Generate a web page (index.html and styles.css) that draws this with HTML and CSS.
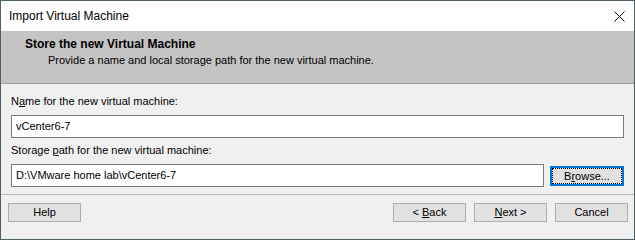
FILE: index.html
```html
<!DOCTYPE html>
<html>
<head>
<meta charset="utf-8">
<link rel="stylesheet" href="styles.css">
</head>
<body>
<div class="window">
  <div class="titlebar">
    <span class="title">Import Virtual Machine</span>
    <svg class="close" width="11" height="11" viewBox="0 0 11 11"><path d="M0.5 0.5 L10.5 10.5 M10.5 0.5 L0.5 10.5" stroke="#000" stroke-width="1" fill="none"/></svg>
  </div>
  <div class="header">
    <div class="h-title">Store the new Virtual Machine</div>
    <div class="h-sub">Provide a name and local storage path for the new virtual machine.</div>
  </div>
  <div class="content">
    <div class="label">N<u>a</u>me for the new virtual machine:</div>
    <div class="row">
      <div class="input">vCenter6-7</div>
    </div>
    <div class="label">Storage <u>p</u>ath for the new virtual machine:</div>
    <div class="row">
      <div class="input">D:\VMware home lab\vCenter6-7</div>
      <div class="btn focus">B<u>r</u>owse...</div>
    </div>
  </div>
  <div class="footer">
    <div class="btn">Help</div>
    <div class="spacer"></div>
    <div class="btn">&lt; <u>B</u>ack</div>
    <div class="btn"><u>N</u>ext &gt;</div>
    <div class="btn">Cancel</div>
  </div>
</div>
</body>
</html>
```

FILE: styles.css
```css
html, body {
  margin: 0;
  padding: 0;
  background: #f0f0f0;
}
body {
  font-family: "Liberation Sans", Arial, sans-serif;
  font-size: 11px;
  color: #000;
}
.window {
  width: 635px;
  height: 240px;
  box-sizing: border-box;
  border: 1px solid #4f6060;
  display: flex;
  flex-direction: column;
  background: #f0f0f0;
}
.titlebar {
  height: 30px;
  background: #fff;
  display: flex;
  align-items: center;
  padding: 0 9px 0 8px;
  line-height: 30px;
  font-size: 12px;
}
.title {
  flex: 1;
}
.close {
  display: block;
  margin-top: 1px;
}
.header {
  height: 52px;
  background: #c4c4c4;
  border-bottom: 1px solid #a0a0a0;
}
.h-title {
  font-weight: bold;
  font-size: 12px;
  line-height: 16px;
  padding: 5px 0 0 24px;
}
.h-sub {
  line-height: 16px;
  padding-left: 47px;
}
.content {
  padding: 10px 10px 0 10px;
  height: 110px;
  box-sizing: border-box;
  display: flex;
  flex-direction: column;
}
.label {
  line-height: 15px;
  margin-bottom: 6px;
}
.row {
  display: flex;
  align-items: center;
  gap: 6px;
  margin-bottom: 5px;
}
.input {
  flex: 1;
  height: 23px;
  box-sizing: border-box;
  border: 1px solid #7a7a7a;
  background: #fff;
  padding-left: 4px;
  line-height: 21px;
}
.btn {
  width: 73px;
  height: 19px;
  box-sizing: border-box;
  border: 1px solid #adadad;
  background: #e1e1e1;
  text-align: center;
  line-height: 17px;
}
.btn.focus {
  width: 74px;
  height: 20px;
  border: 2px solid #0078d7;
  outline: 1px dotted #000;
  outline-offset: -3px;
  line-height: 16px;
}
.footer {
  border-top: 1px solid #b9b9b9;
  flex: 1;
  display: flex;
  align-items: flex-start;
  gap: 8px;
  padding: 8px 6px 0 7px;
}
.spacer {
  flex: 1;
}
u {
  text-decoration: underline;
  text-underline-offset: 1px;
}
```
